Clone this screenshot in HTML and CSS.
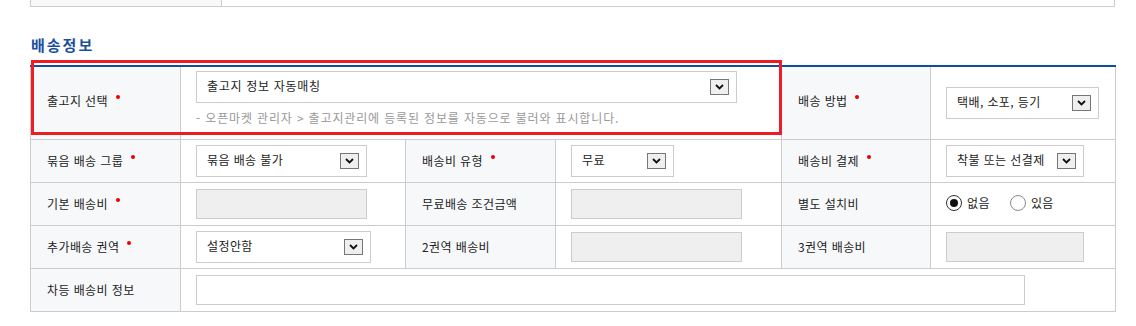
FILE: index.html
```html
<!DOCTYPE html>
<html lang="ko">
<head>
    <meta charset="UTF-8">
    <meta name="viewport" content="width=device-width, initial-scale=1.0">
    <title>배송정보</title>
    <link rel="stylesheet" href="styles.css">
</head>
<body>
    <div class="page">
        <table class="stub">
            <colgroup><col class="stub-label"><col></colgroup>
            <tr><th></th><td></td></tr>
        </table>

        <h2 class="section-title">배송정보</h2>

        <div class="table-wrap">
            <table class="form-table">
                <colgroup>
                    <col class="c1"><col class="c2"><col class="c3"><col class="c4"><col class="c5"><col class="c6">
                </colgroup>
                <tr class="row-tall">
                    <th>출고지 선택 <span class="req"></span></th>
                    <td colspan="3" class="top-cell">
                        <div class="sel w-541">
                            <span>출고지 정보 자동매칭</span>
                            <span class="arrow"><svg width="9" height="6" viewBox="0 0 9 6"><path d="M1 1 L4.5 4.5 L8 1" fill="none" stroke="#111" stroke-width="1.8"/></svg></span>
                        </div>
                        <p class="hint">- 오픈마켓 관리자 &gt; 출고지관리에 등록된 정보를 자동으로 불러와 표시합니다.</p>
                    </td>
                    <th>배송 방법 <span class="req"></span></th>
                    <td>
                        <div class="sel w-153">
                            <span>택배, 소포, 등기</span>
                            <span class="arrow"><svg width="9" height="6" viewBox="0 0 9 6"><path d="M1 1 L4.5 4.5 L8 1" fill="none" stroke="#111" stroke-width="1.8"/></svg></span>
                        </div>
                    </td>
                </tr>
                <tr>
                    <th>묶음 배송 그룹 <span class="req"></span></th>
                    <td>
                        <div class="sel w-171">
                            <span>묶음 배송 불가</span>
                            <span class="arrow"><svg width="9" height="6" viewBox="0 0 9 6"><path d="M1 1 L4.5 4.5 L8 1" fill="none" stroke="#111" stroke-width="1.8"/></svg></span>
                        </div>
                    </td>
                    <th>배송비 유형 <span class="req"></span></th>
                    <td>
                        <div class="sel w-103">
                            <span>무료</span>
                            <span class="arrow"><svg width="9" height="6" viewBox="0 0 9 6"><path d="M1 1 L4.5 4.5 L8 1" fill="none" stroke="#111" stroke-width="1.8"/></svg></span>
                        </div>
                    </td>
                    <th>배송비 결제 <span class="req"></span></th>
                    <td>
                        <div class="sel w-138">
                            <span>착불 또는 선결제</span>
                            <span class="arrow"><svg width="9" height="6" viewBox="0 0 9 6"><path d="M1 1 L4.5 4.5 L8 1" fill="none" stroke="#111" stroke-width="1.8"/></svg></span>
                        </div>
                    </td>
                </tr>
                <tr>
                    <th>기본 배송비 <span class="req"></span></th>
                    <td><div class="field disabled w-171"></div></td>
                    <th>무료배송 조건금액</th>
                    <td><div class="field disabled w-171"></div></td>
                    <th>별도 설치비</th>
                    <td>
                        <div class="radios">
                            <label class="radio"><span class="dot checked"></span>없음</label>
                            <label class="radio"><span class="dot"></span>있음</label>
                        </div>
                    </td>
                </tr>
                <tr>
                    <th>추가배송 권역 <span class="req"></span></th>
                    <td>
                        <div class="sel w-175">
                            <span>설정안함</span>
                            <span class="arrow"><svg width="9" height="6" viewBox="0 0 9 6"><path d="M1 1 L4.5 4.5 L8 1" fill="none" stroke="#111" stroke-width="1.8"/></svg></span>
                        </div>
                    </td>
                    <th>2권역 배송비</th>
                    <td><div class="field disabled w-171"></div></td>
                    <th>3권역 배송비</th>
                    <td><div class="field disabled w-138"></div></td>
                </tr>
                <tr>
                    <th>차등 배송비 정보</th>
                    <td colspan="5"><div class="field w-829"></div></td>
                </tr>
            </table>
            <div class="highlight"></div>
        </div>
    </div>
</body>
</html>
```

FILE: styles.css
```css
body {
    margin: 0;
    padding: 0;
    background-color: #ffffff;
    font-family: "Noto Sans CJK KR", "Noto Sans", sans-serif;
    font-size: 12px;
    color: #222222;
}

.page {
    padding-left: 30px;
    width: 1085px;
}

table {
    border-collapse: collapse;
    table-layout: fixed;
    width: 1085px;
}

.stub th,
.stub td {
    height: 6px;
    padding: 0;
    border: 1px solid #cccccc;
    border-top: none;
}

.stub th {
    background-color: #f7f8fa;
}

.stub-label {
    width: 191px;
}

.section-title {
    margin: 29px 0 0 1px;
    height: 29px;
    font-size: 15px;
    line-height: 18px;
    font-weight: bold;
    letter-spacing: 2px;
    color: #1b4f9c;
}

.table-wrap {
    position: relative;
}

.form-table {
    border-top: 2px solid #0e4ea0;
}

.c1 { width: 150px; }
.c2 { width: 225px; }
.c3 { width: 150px; }
.c4 { width: 226px; }
.c5 { width: 149px; }
.c6 { width: 185px; }

.form-table th,
.form-table td {
    border: 1px solid #cccccc;
    height: 40px;
    padding: 0 15px;
    vertical-align: middle;
    text-align: left;
    letter-spacing: 0.4px;
}

.form-table th {
    background-color: #f7f8fa;
    font-weight: normal;
    padding-left: 16px;
    white-space: nowrap;
}

.form-table tr.row-tall th,
.form-table tr.row-tall td {
    height: 66px;
}

.form-table th {
    padding-bottom: 2px;
}

.form-table tr.row-tall th {
    padding-bottom: 6px;
}

.form-table td.top-cell {
    vertical-align: top;
    padding-top: 4px;
    letter-spacing: 0.7px;
}

.req {
    display: inline-block;
    width: 4px;
    height: 4px;
    margin-left: 4px;
    border-radius: 50%;
    background-color: #ee0000;
    vertical-align: 7px;
}

.sel {
    display: flex;
    align-items: center;
    justify-content: space-between;
    box-sizing: border-box;
    height: 32px;
    padding: 0 7px 0 10px;
    border: 1px solid #cccccc;
    background-color: #ffffff;
}

.sel span:first-child {
    margin-top: -3px;
}

.arrow {
    display: flex;
    align-items: center;
    justify-content: center;
    box-sizing: border-box;
    width: 19px;
    height: 16px;
    border: 1px solid #777777;
    background-color: #efefef;
}

.hint {
    margin: 7px 0 0 0;
    line-height: 16px;
    letter-spacing: 0.85px;
    color: #999999;
}

.field {
    box-sizing: border-box;
    height: 30px;
    border: 1px solid #cccccc;
    background-color: #ffffff;
}

.field.disabled {
    background-color: #efefef;
}

.w-541 { width: 541px; }
.w-175 { width: 175px; }
.w-171 { width: 171px; }
.w-153 { width: 153px; }
.w-138 { width: 138px; }
.w-103 { width: 103px; }
.w-829 { width: 829px; }

.radios {
    display: flex;
    align-items: center;
    gap: 20px;
    margin-top: -2px;
}

.radio {
    display: flex;
    align-items: center;
    line-height: 16px;
}

.dot {
    display: flex;
    align-items: center;
    justify-content: center;
    box-sizing: border-box;
    width: 16px;
    height: 16px;
    margin-right: 5px;
    border: 1px solid #8a8a8a;
    border-radius: 50%;
    background-color: #ffffff;
}

.dot.checked {
    border-color: #333333;
}

.dot.checked::after {
    content: "";
    width: 8px;
    height: 8px;
    border-radius: 50%;
    background-color: #111111;
}

.highlight {
    position: absolute;
    left: 1px;
    top: -5px;
    width: 751px;
    height: 75px;
    box-sizing: border-box;
    border: 3px solid #ee1c25;
    pointer-events: none;
}
```
